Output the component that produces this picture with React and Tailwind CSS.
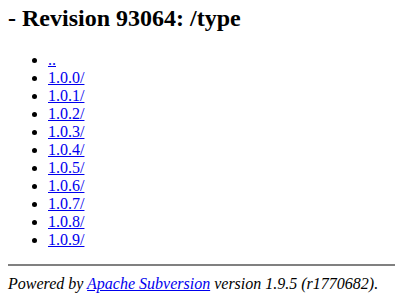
const versions = ["1.0.0", "1.0.1", "1.0.2", "1.0.3", "1.0.4", "1.0.5", "1.0.6", "1.0.7", "1.0.8", "1.0.9"];

export default function App() {
  return (
    <div className="min-h-screen bg-white px-2 font-['Liberation_Serif',serif] text-black">
      <h2 className="mb-[19px] pt-[5px] text-[24px] font-bold leading-[normal]">- Revision 93064: /type</h2>
      <ul className="list-disc pl-10 text-[16px] leading-[normal]">
        <li>
          <a href="#" className="text-[#0000ee] underline">..</a>
        </li>
        {versions.map((v) => (
          <li key={v}>
            <a href="#" className="text-[#0000ee] underline">{v}/</a>
          </li>
        ))}
      </ul>
      <hr className="mt-[15px] mb-[6px] h-[2px] border-0 bg-[#808080]" />
      <em className="text-[16px] leading-[normal]">
        Powered by <a href="#" className="text-[#0000ee] underline">Apache Subversion</a> version 1.9.5 (r1770682).
      </em>
    </div>
  );
}
